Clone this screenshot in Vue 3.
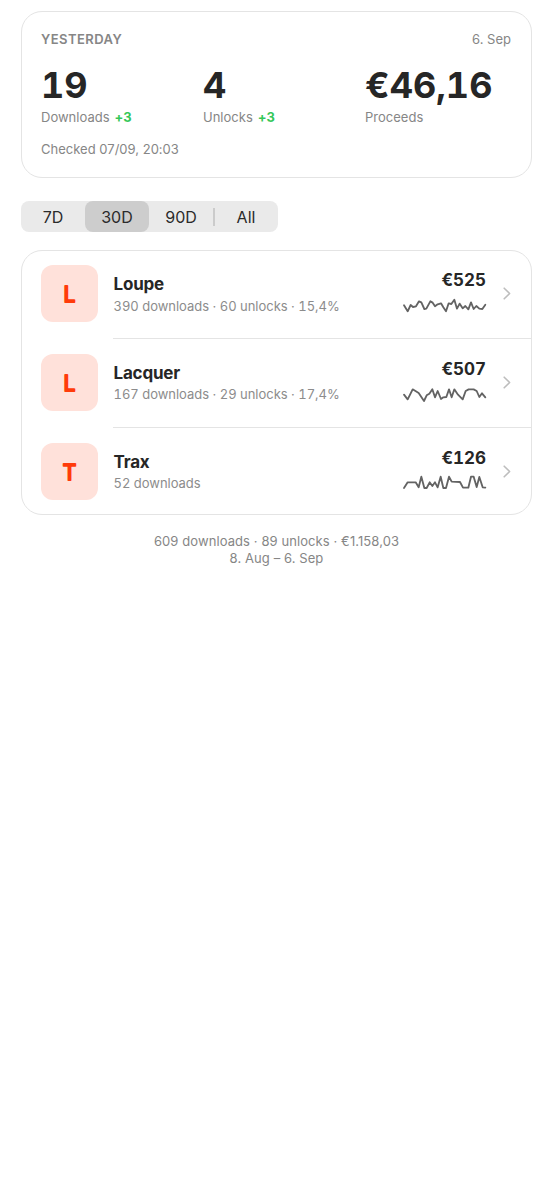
<script setup>
const stats = [
  { value: '19', label: 'Downloads', delta: '+3' },
  { value: '4', label: 'Unlocks', delta: '+3' },
  { value: '€46,16', label: 'Proceeds', delta: '' },
]
const apps = [
  {
    name: 'Loupe', detail: '390 downloads · 60 unlocks · 15,4%', total: '€525',
    trend: '3,22 14,40 23,21 30,27 39,25 48,10 55,13 64,33 70,32 82,10 89,14 96,25 104,19 114,16 121,28 129,40 137,16 145,18 154,5 162,32 170,17 179,31 187,24 196,34 204,13 212,33 220,24 229,32 238,33 247,20',
  },
  {
    name: 'Lacquer', detail: '167 downloads · 29 unlocks · 17,4%', total: '€507',
    trend: '3,23 14,37 29,7 47,18 63,42 71,25 79,20 88,7 96,31 104,12 114,36 121,31 130,30 138,7 146,31 154,7 165,23 179,37 188,12 197,7 212,7 221,12 229,30 237,19 247,31',
  },
  {
    name: 'Trax', detail: '52 downloads', total: '€126',
    trend: '3,36 14,19 38,19 47,34 55,2 64,36 71,36 80,19 88,30 96,19 104,34 113,2 121,36 129,36 138,2 146,17 171,18 180,35 196,35 204,2 212,2 221,33 229,3 239,34 247,35',
  },
]
</script>

<template>
  <main class="page">
    <section class="card summary">
      <header class="summary-head">
        <span class="eyebrow">YESTERDAY</span>
        <span>6. Sep</span>
      </header>
      <div class="stats">
        <div v-for="s in stats" :key="s.label">
          <div class="value">{{ s.value }}</div>
          <div class="label">{{ s.label }}<b v-if="s.delta">{{ s.delta }}</b></div>
        </div>
      </div>
      <div class="checked">Checked 07/09, 20:03</div>
    </section>

    <nav class="segments">
      <button>7D</button>
      <button class="active">30D</button>
      <button>90D</button>
      <i class="bar"></i>
      <button>All</button>
    </nav>

    <section class="card list">
      <article v-for="a in apps" :key="a.name" class="row">
        <svg class="tile" viewBox="0 0 57 57">
          <text x="28.5" y="37">{{ a.name[0] }}</text>
        </svg>
        <div class="content">
          <div class="info">
            <div class="name">{{ a.name }}</div>
            <div class="detail">{{ a.detail }}</div>
          </div>
          <div class="figures">
            <div class="total">{{ a.total }}</div>
            <svg class="spark" viewBox="0 0 249 45"><polyline :points="a.trend" /></svg>
          </div>
          <svg class="chevron" viewBox="0 0 8 13"><path d="M1.2 1.2 6.6 6.5 1.2 11.8" /></svg>
        </div>
      </article>
    </section>

    <footer class="totals">
      <div>609 downloads · 89 unlocks · €1.158,03</div>
      <div>8. Aug – 6. Sep</div>
    </footer>
  </main>
</template>

<style>
body { background: #fff; }
</style>

<style scoped>
.page {
  box-sizing: border-box;
  padding: 11px 21px 0;
  font-family: Inter, sans-serif;
  font-size: 13px;
  line-height: 17px;
  letter-spacing: 0.01px;
  color: #868686;
}
.card {
  box-sizing: border-box;
  border: 1px solid #e4e4e4;
  border-radius: 21px;
  background: #fff;
}
.summary { height: 167px; padding: 19px 20px 0 19px; }
.summary-head { display: flex; justify-content: space-between; }
.eyebrow { font-weight: 600; letter-spacing: 0.45px; }
.stats { display: grid; grid-template-columns: repeat(3, 162px); margin-top: 15px; }
.value {
  height: 46px;
  line-height: 45px;
  font-size: 36px;
  font-weight: 700;
  letter-spacing: 0;
  color: #262626;
  font-variant-numeric: tabular-nums;
}
.label b { margin-left: 5px; font-weight: 700; letter-spacing: -0.1px; color: #34c759; }
.checked { margin-top: 15px; }
.segments {
  display: flex;
  align-items: center;
  width: 257px;
  height: 31px;
  margin: 23px 0 18px;
  border-radius: 8px;
  background: #eaeaea;
}
.segments button {
  width: 64px;
  height: 31px;
  padding: 0;
  border: 0;
  border-radius: 8px;
  background: none;
  font: 16px/32px Inter, sans-serif;
  color: #2b2b2b;
}
.segments .active { background: #cdcdcd; }
.bar { width: 2px; height: 18px; margin: 0 -1px 0 0; background: #cbcbcb; }
.list { height: 265px; padding-left: 19px; }
.row { display: flex; height: 88.8px; }
.tile { width: 57px; height: 57px; margin-top: 14px; border-radius: 12px; background: #ffe1da; }
.tile text {
  font-size: 21px;
  font-weight: 400;
  letter-spacing: 0;
  text-anchor: middle;
  fill: #ff3b0a;
  stroke: #ff3b0a;
  stroke-width: 1.9px;
  stroke-linejoin: round;
}
.content {
  display: flex;
  flex: 1;
  box-sizing: border-box;
  margin: 0 -1px 1px 15px;
  padding: 0 21px 0 0.5px;
  border-bottom: 1px solid #e4e4e4;
}
.row:last-child .content { border-bottom: 0; }
.info { flex: 1; padding-top: 22px; }
.name { font-size: 17px; line-height: 22px; font-weight: 700; letter-spacing: -0.2px; color: #262626; }
.detail { margin-top: 2.5px; letter-spacing: -0.02px; color: #8c8c8c; font-variant-numeric: tabular-nums; }
.figures { display: flex; flex-direction: column; align-items: flex-end; padding-top: 18px; }
.total {
  font-size: 17px;
  line-height: 22px;
  font-weight: 700;
  letter-spacing: 0;
  color: #262626;
  font-variant-numeric: tabular-nums;
}
.spark { width: 83px; height: 15px; margin-top: 7px; overflow: visible; }
.spark polyline { fill: none; stroke: #636363; stroke-width: 5.5; stroke-linejoin: round; stroke-linecap: round; }
.chevron { width: 8px; height: 13px; margin: 36px 0 0 17px; fill: none; stroke: #bdbdbd; stroke-width: 1.6; stroke-linecap: round; stroke-linejoin: round; }
.totals { margin-top: 18px; text-align: center; letter-spacing: 0.09px; }
</style>
